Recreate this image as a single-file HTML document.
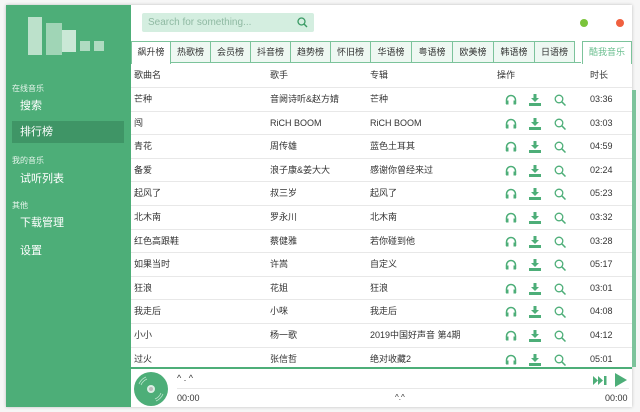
<!DOCTYPE html><html><head><meta charset="utf-8"><style>
*{margin:0;padding:0;box-sizing:border-box}
body{width:640px;height:412px;background:#f6f6f6;font-family:"Liberation Sans","Noto Sans CJK SC",sans-serif;position:relative;overflow:hidden;font-size:9px;color:#333}
#win{position:absolute;left:6px;top:5px;width:626px;height:402px;background:#fff;box-shadow:0 0 3px #bbb}
#side{position:absolute;left:0;top:0;width:125px;height:402px;background:#4dae78;color:#fff}
.sec{position:absolute;left:6px;font-size:8px;color:#e6f5ec}
.it{position:absolute;left:6px;width:112px;height:22px;line-height:22px;padding-left:8px;font-size:11px}
.act{background:#3f9566}
.px{position:absolute;background:#d8eee0}
#search{position:absolute;left:138px;top:9px;width:172px;height:19px;background:#d4eee0;border-radius:2px;color:#8fb9a2;font-size:10px;line-height:19px;padding-left:6px}
.tab{position:absolute;top:36px;height:22px;border:1px solid #7cc39b;border-left:none;background:#eef8f2;text-align:center;line-height:20px;font-size:9px}
.row{position:absolute;left:125px;width:501px;height:24px;border-bottom:1px solid #e8e8e8;line-height:24px}
.row span{position:absolute}
.ic{position:absolute;top:6px}
</style></head><body>
<div id="win">
<div id="side">
<div class="px" style="left:22px;top:12px;width:14px;height:38px;opacity:.8"></div>
<div class="px" style="left:40px;top:18px;width:16px;height:32px;opacity:.6"></div>
<div class="px" style="left:56px;top:25px;width:14px;height:22px;opacity:.9"></div>
<div class="px" style="left:74px;top:36px;width:10px;height:10px;opacity:.7"></div>
<div class="px" style="left:88px;top:36px;width:10px;height:10px;opacity:.7"></div>
<div class="sec" style="top:78px">在线音乐</div>
<div class="it" style="top:90px">搜索</div>
<div class="it act" style="top:116px">排行榜</div>
<div class="sec" style="top:150px">我的音乐</div>
<div class="it" style="top:163px">试听列表</div>
<div class="sec" style="top:195px">其他</div>
<div class="it" style="top:207px">下载管理</div>
<div class="it" style="top:235px">设置</div>
</div>
<div id="search" style="left:136px;top:8px">Search for something...
<svg style="position:absolute;right:6px;top:4px" width="11" height="11" viewBox="0 0 11 11"><circle cx="4.5" cy="4.5" r="3.5" fill="none" stroke="#3a9a64" stroke-width="1.3"/><path d="M7 7l3 3" stroke="#3a9a64" stroke-width="1.4"/></svg></div>
<div style="position:absolute;left:574px;top:14px;width:8px;height:8px;border-radius:50%;background:#7bc43b"></div>
<div style="position:absolute;left:610px;top:14px;width:8px;height:8px;border-radius:50%;background:#f0603f"></div>
<div style="position:absolute;left:125px;top:57px;width:450px;border-top:1px solid #7cc39b"></div>
<div class="tab" style="left:125px;width:40px;background:#fff;border-left:1px solid #7cc39b;border-bottom:none;height:23px">飙升榜</div>
<div class="tab" style="left:165px;width:40px">热歌榜</div>
<div class="tab" style="left:205px;width:40px">会员榜</div>
<div class="tab" style="left:245px;width:40px">抖音榜</div>
<div class="tab" style="left:285px;width:40px">趋势榜</div>
<div class="tab" style="left:325px;width:40px">怀旧榜</div>
<div class="tab" style="left:365px;width:41px">华语榜</div>
<div class="tab" style="left:406px;width:41px">粤语榜</div>
<div class="tab" style="left:447px;width:41px">欧美榜</div>
<div class="tab" style="left:488px;width:41px">韩语榜</div>
<div class="tab" style="left:529px;width:40px">日语榜</div>
<div class="tab" style="left:576px;width:50px;background:#fff;border-left:1px solid #7cc39b;border-bottom:none;color:#6cbf90;height:23px">酷我音乐</div>
<div style="position:absolute;left:626px;top:85px;width:4px;height:277px;background:#7cc39b"></div>
<div id="rows"></div>
<div style="position:absolute;left:125px;top:362px;width:501px;height:40px;border-top:2px solid #4dae78;background:#fff">
<svg style="position:absolute;left:2px;top:2px" width="36" height="36" viewBox="0 0 36 36"><circle cx="18" cy="18" r="17" fill="#4dae78"/><circle cx="18" cy="18" r="4" fill="#fff" opacity=".8"/><circle cx="18" cy="18" r="2" fill="#bbb"/><path d="M8 14a11 11 0 0 1 6-6M6 13a13 13 0 0 1 7-7M28 22a11 11 0 0 1-6 6M30 23a13 13 0 0 1-7 7" stroke="#bfe6cf" fill="none" stroke-width=".8"/></svg>
<div style="position:absolute;left:46px;top:4px;font-size:9px">^ . ^</div>
<div style="position:absolute;left:46px;top:19px;width:452px;border-top:1px solid #e8e8e8"></div>
<div style="position:absolute;left:46px;top:24px">00:00</div>
<div style="position:absolute;left:264px;top:24px;font-size:8px">^.^</div>
<div style="position:absolute;left:474px;top:24px">00:00</div>
<svg style="position:absolute;left:462px;top:7px" width="14" height="9" viewBox="0 0 14 9"><path d="M0 0l5 4.5L0 9zM5 0l5 4.5L5 9z" fill="#4dae78"/><rect x="11" y="0" width="2.5" height="9" fill="#4dae78"/></svg>
<svg style="position:absolute;left:484px;top:4px" width="12" height="14" viewBox="0 0 12 14"><path d="M0 0l12 7L0 14z" fill="#4dae78"/></svg>
</div>
</div>
<script>
var d=[["歌曲名","歌手","专辑","",""],["芒种","音阙诗听&赵方婧","芒种",1,"03:36"],["闯","RiCH BOOM","RiCH BOOM",1,"03:03"],["青花","周传雄","蓝色土耳其",1,"04:59"],["备爱","浪子康&姜大大","感谢你曾经来过",1,"02:24"],["起风了","叔三岁","起风了",1,"05:23"],["北木南","罗永川","北木南",1,"03:32"],["红色高跟鞋","蔡健雅","若你碰到他",1,"03:28"],["如果当时","许嵩","自定义",1,"05:17"],["狂浪","花姐","狂浪",1,"03:01"],["我走后","小咪","我走后",1,"04:08"],["小小","杨一歌","2019中国好声音 第4期",1,"04:12"],["过火","张信哲","绝对收藏2",1,"05:01"]];
var h="",g="#4dae78",ic='<svg class="ic" style="left:374px" width="12" height="11" viewBox="0 0 12 11"><path d="M1.5 10V6a4.5 4.5 0 0 1 9 0v4" fill="none" stroke="'+g+'" stroke-width="1.5"/><rect x="1" y="6.5" width="2.5" height="4" fill="'+g+'"/><rect x="8.5" y="6.5" width="2.5" height="4" fill="'+g+'"/></svg><svg class="ic" style="left:398px" width="12" height="12" viewBox="0 0 12 12"><path d="M4.5 0h3v4h2.5L6 8 2 4h2.5z" fill="'+g+'"/><rect x="0" y="9" width="12" height="3" fill="'+g+'"/></svg><svg class="ic" style="left:423px" width="12" height="12" viewBox="0 0 12 12"><circle cx="5" cy="5" r="3.8" fill="none" stroke="'+g+'" stroke-width="1.3"/><path d="M7.8 7.8L11.5 11.5" stroke="'+g+'" stroke-width="1.5"/></svg>';
d.forEach(function(r,i){var t=i==0?58:(83+(i-1)*23.6);h+='<div class="row" style="top:'+t+'px;height:'+(i==0?25:23.6)+'px;line-height:'+(i==0?25:23.6)+'px"><span style="left:3px">'+r[0]+'</span><span style="left:139px">'+r[1]+'</span><span style="left:239px">'+r[2]+'</span>'+(r[3]?ic:'<span style="left:366px">操作</span>')+'<span style="left:459px">'+(i==0?'时长':r[4])+'</span></div>';});
document.getElementById("rows").innerHTML=h;
</script>
</body></html>
